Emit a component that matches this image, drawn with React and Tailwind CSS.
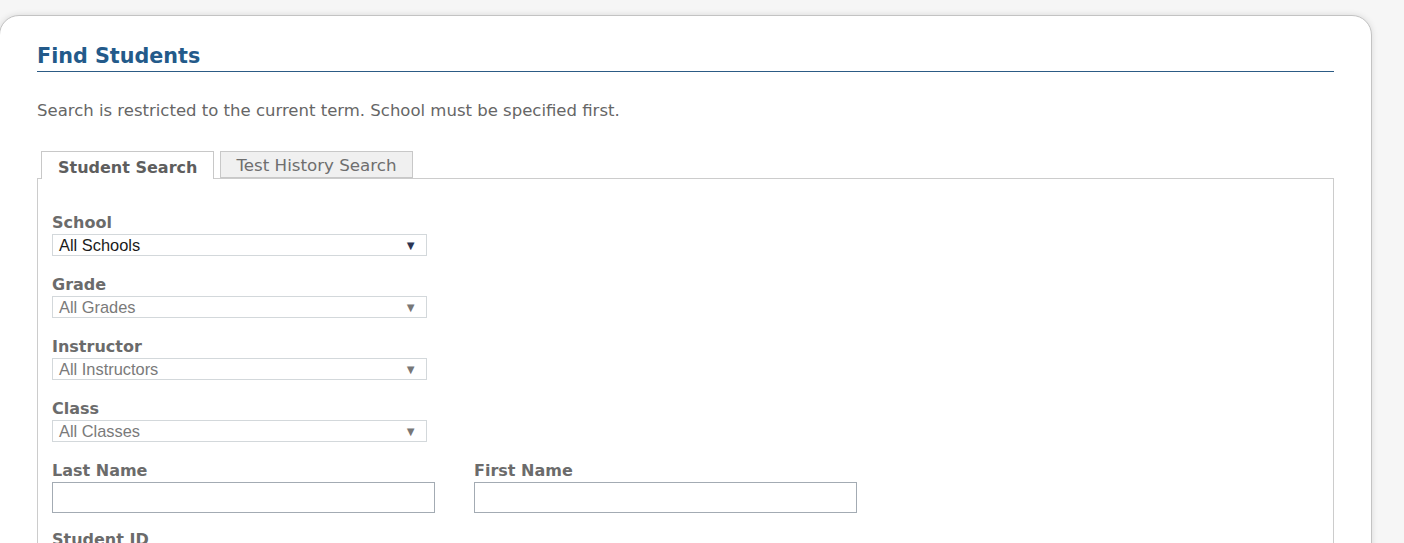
import React from "react";

const SelectBox = ({ value, enabled }) => (
  <div
    className={`flex items-center justify-between w-[375px] h-[22px] border border-[#d3d8db] bg-white pl-[6px] pr-[9px] text-[16.4px] leading-none ${
      enabled ? "text-[#1a1a1a]" : "text-[#7a7a7a]"
    }`}
    style={{ fontFamily: '"Liberation Sans", Arial, sans-serif' }}
  >
    <span>{value}</span>
    <span className={`text-[13px] ${enabled ? "text-[#2b3553]" : "text-[#777]"}`}>▼</span>
  </div>
);

const Field = ({ label, value, enabled }) => (
  <div className="mb-[19px]">
    <div className="text-[16px] font-bold text-[#6b6b6b] leading-[20px] mb-[1px]">{label}</div>
    <SelectBox value={value} enabled={enabled} />
  </div>
);

const TextField = ({ label }) => (
  <div>
    <div className="text-[16px] font-bold text-[#6b6b6b] leading-[20px] mb-[1px]">{label}</div>
    <input className="w-[383px] h-[31px] border border-[#a3abb3] bg-white outline-none" />
  </div>
);

export default function App() {
  return (
    <div
      className="min-h-screen h-[543px] overflow-hidden bg-[#f6f6f6] pt-[15px]"
      style={{ fontFamily: '"DejaVu Sans", Verdana, sans-serif' }}
    >
      <div className="w-[1373px] h-[600px] ml-[-1px] bg-white border border-[#c3c3c3] rounded-t-[20px] shadow-[0_0_6px_rgba(0,0,0,0.12)] pl-[37px] pr-[37px] pt-[28px]">
        {/* Heading */}
        <h1 className="text-[20.7px] font-bold text-[#235a8a] leading-[24px] pb-[3px] border-b border-[#2c5b85]">
          Find Students
        </h1>

        <p className="mt-[29px] text-[16.5px] text-[#666] leading-[20px]">
          Search is restricted to the current term. School must be specified first.
        </p>

        {/* Tabs */}
        <div className="mt-[30px] flex items-end pl-[4px] gap-[6px] relative z-10">
          <div className="h-[28px] px-[16px] pt-[5px] border border-[#c8c8c8] border-b-0 bg-white text-[16px] font-bold text-[#5e5e5e] flex items-center mb-[-1px]">
            Student Search
          </div>
          <div className="h-[27px] px-[15px] pt-[3px] border border-[#c8c8c8] bg-[#f0f0f0] text-[16.7px] text-[#6e6e6e] flex items-center">
            Test History Search
          </div>
        </div>

        <div className="border border-[#cccccc] h-[400px] pl-[14px] pt-[34px]">
          <Field label="School" value="All Schools" enabled />
          <Field label="Grade" value="All Grades" />
          <Field label="Instructor" value="All Instructors" />
          <Field label="Class" value="All Classes" />
          <div className="flex gap-[39px] mb-[17px]">
            <TextField label="Last Name" />
            <TextField label="First Name" />
          </div>
          <div className="text-[16px] font-bold text-[#6b6b6b] leading-[20px]">Student ID</div>
        </div>
      </div>
    </div>
  );
}
